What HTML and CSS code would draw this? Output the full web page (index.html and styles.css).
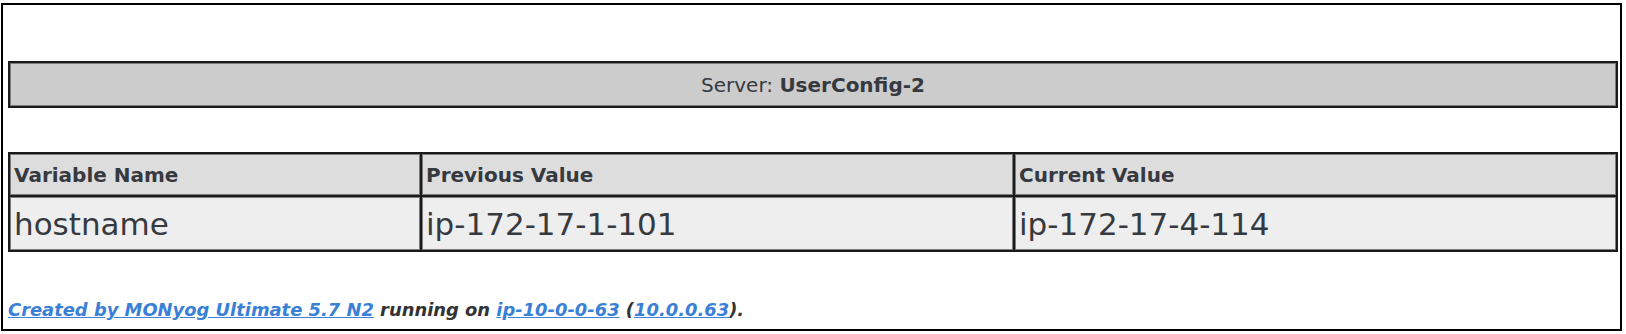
FILE: index.html
```html
<!DOCTYPE html>
<html>
<head>
<meta charset="utf-8">
<link rel="stylesheet" href="styles.css">
</head>
<body>
<div class="frame">
  <table class="grid server">
    <tr><td class="server-cell">Server: <b>UserConfig-2</b></td></tr>
  </table>
  <table class="grid vars">
    <colgroup>
      <col class="c1"><col class="c2"><col class="c3">
    </colgroup>
    <tr class="head">
      <th>Variable Name</th>
      <th>Previous Value</th>
      <th>Current Value</th>
    </tr>
    <tr class="row">
      <td>hostname</td>
      <td>ip-172-17-1-101</td>
      <td>ip-172-17-4-114</td>
    </tr>
  </table>
  <p class="footer"><a href="#">Created by MONyog Ultimate 5.7 N2</a> running on <a href="#">ip-10-0-0-63</a> (<a href="#">10.0.0.63</a>).</p>
</div>
</body>
</html>
```
FILE: styles.css
```css
html, body {
  margin: 0;
  padding: 0;
  background: #ffffff;
}
body {
  font-family: "DejaVu Sans", Verdana, sans-serif;
  color: #363a40;
}
.frame {
  margin: 3px 4px 3px 1px;
  height: 328px;
  box-sizing: border-box;
  border: 2px solid #000;
  padding: 56px 2px 0 5px;
}
.grid {
  width: 100%;
  border-collapse: separate;
  border-spacing: 2px;
  background: #1a1a1a;
  border: none;
}
.grid td, .grid th {
  border: 1px solid #7c7c7c;
}
.server-cell {
  background: #cccccc;
  height: 41px;
  padding: 0;
  text-align: center;
  font-size: 20px;
}
.vars {
  margin-top: 44px;
  table-layout: fixed;
}
.c1 { width: 410px; }
.c2 { width: 591px; }
.head th {
  background: #dddddd;
  height: 39px;
  padding: 0 3px;
  text-align: left;
  font-size: 20px;
  font-weight: bold;
}
.row td {
  background: #eeeeee;
  height: 51px;
  padding: 0 3px;
  font-size: 31px;
}
.footer {
  margin: 47px 0 0 0;
  font-size: 17.9px;
  font-weight: bold;
  font-style: italic;
  color: #333333;
}
.footer a {
  color: #3a80d6;
  text-decoration: underline;
}
```
